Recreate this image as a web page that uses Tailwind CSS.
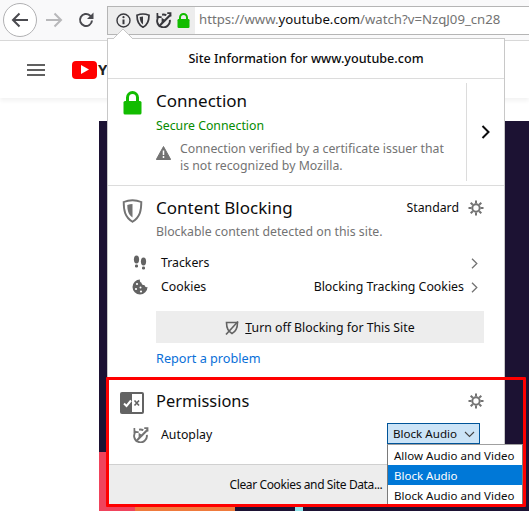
<!doctype html>
<html><head><meta charset="utf-8">
<script src="https://cdn.jsdelivr.net/npm/@tailwindcss/browser@4"></script>
</head>
<body class="m-0 bg-white">
<div class="relative w-[529px] h-[511px] overflow-hidden bg-white text-[12.3px] text-[#0c0c0d]" style="font-family:'Noto Sans','Open Sans',sans-serif">

  <!-- toolbar -->
  <div class="flex items-center h-[41px] bg-[#f9f9fa] border-b border-[#d8d8d8]">
    <div class="ml-[3px] w-[34px] h-[34px] shrink-0 rounded-full border border-[#b1b1b3] bg-white flex items-center justify-center">
      <svg width="18" height="16" viewBox="0 0 18 16" fill="none" stroke="#4a4a4f" stroke-width="2"><path d="M17 8H2M8.500 1.500 2 8l6.500 6.500"/></svg>
    </div>
    <svg class="ml-[8px] shrink-0" width="18" height="16" viewBox="0 0 18 16" fill="none" stroke="#b8b8ba" stroke-width="2"><path d="M1 8h15M9.500 1.500 16 8l-6.500 6.500"/></svg>
    <svg class="ml-[15px] shrink-0" width="16" height="16" viewBox="0 0 16 16" fill="none" stroke="#4a4a4f" stroke-width="2"><path d="M14 8.500a6 6 0 1 1-2-5L14 5"/><path d="M15.500 .5V7H9" fill="#4a4a4f" stroke="none"/></svg>
    <div class="ml-[13px] flex-1 h-[29px] border border-[#b5b5b5] border-r-0 bg-white flex items-stretch">
      <div class="w-[87px] shrink-0 bg-[#ededed] flex items-center pl-[8px] gap-[5px]">
        <svg class="shrink-0" width="15" height="15" viewBox="0 0 15 15" fill="none" stroke="#38383d"><circle cx="7.500" cy="7.500" r="6.500" stroke-width="1.400"/><path d="M7.500 6.500v4.700" stroke-width="2"/><circle cx="7.500" cy="4.200" r="1.100" fill="#38383d" stroke="none"/></svg>
        <svg class="shrink-0" width="14" height="15" viewBox="0 0 14 15" fill="none"><path d="M7 1c2 0 4 .4 6 1.200 0 5-.6 9.500-6 12C1.600 11.700 1 7.200 1 2.200 3 1.400 5 1 7 1Z" stroke="#38383d" stroke-width="1.700"/><path d="M7 3.500v8C4.500 10 3.800 7.300 3.700 4.100 4.800 3.700 5.900 3.500 7 3.500Z" fill="#38383d"/></svg>
        <svg class="shrink-0" width="17" height="16" viewBox="0 0 18 17" fill="none" stroke="#38383d" stroke-width="2"><path d="M4.500 4.400A6.800 6.800 0 1 0 15.700 8.300"/><path d="M7.500 2.900A6.800 6.800 0 0 1 12 3.400"/><path d="M2.500 1v4.500H7" stroke-width="1.800"/><path d="M13 1.200h3.500v3.500" stroke-width="1.800"/><path d="M4 15.500 16.500 3" stroke-width="2.200"/><path d="M7 6 11.500 9 7 12Z" fill="#38383d" stroke="none"/></svg>
        <svg class="shrink-0" width="13" height="15" viewBox="0 0 13 15"><path d="M3 7V4.500a3.500 3.500 0 0 1 7 0V7" fill="none" stroke="#12bc00" stroke-width="2"/><rect x="0.500" y="6" width="12" height="9" rx="1.200" fill="#12bc00"/></svg>
      </div>
      <div class="pl-[4px] flex items-center whitespace-nowrap text-[13.200px] text-[#737373]">https://www.<span class="text-[#0c0c0d]">youtube.com</span>/watch?v=NzqJ09_cn28</div>
    </div>
  </div>

  <!-- page header -->
  <div class="flex items-center h-[57px] shadow-[0_3px_4px_rgba(0,0,0,0.05)]">
    <div class="ml-[27px] w-[18px] flex flex-col gap-[3px]">
      <div class="h-[2px] bg-[#606060]"></div><div class="h-[2px] bg-[#606060]"></div><div class="h-[2px] bg-[#606060]"></div>
    </div>
    <div class="ml-[27px] w-[25px] h-[18px] rounded-[4px] bg-[#f00] flex items-center justify-center">
      <svg width="8" height="9" viewBox="0 0 8 9"><path d="M0 0l8 4.500L0 9Z" fill="#fff"/></svg>
    </div>
    <span class="text-[15px] font-bold text-[#222] ml-[1px]">Y</span>
  </div>

  <!-- video area -->
  <div class="absolute left-[99px] right-0 top-[121px] bottom-0 bg-[#1c1233]">
    <div class="absolute left-0 w-[38px] top-[331px] bottom-0 bg-[#f0435c]"></div>
    <div class="absolute left-[36px] w-[100px] top-[382px] bottom-0 bg-[#ef7a3c]"></div>
    <div class="absolute left-[196px] w-[8px] top-[380px] bottom-0 bg-[#8fe3ea]"></div>
  </div>

  <!-- panel -->
  <div class="absolute left-[107px] top-[38px] w-[398px] h-[468px] bg-white border border-[#c8c8c8] border-b-0 flex flex-col">
    <div class="h-[40px] shrink-0 flex items-center justify-center border-b border-[#dcdcdc] pt-[2px] font-medium text-[12.600px] text-[#0c0c0d]">Site Information for www.youtube.com</div>

    <!-- connection -->
    <div class="h-[107px] shrink-0 border-b border-[#dcdcdc] flex">
      <svg class="ml-[15px] mt-[12px] shrink-0" width="19" height="24" viewBox="0 0 19 24"><path d="M4.500 11V6.500a5 5 0 0 1 10 0V11" fill="none" stroke="#12bc00" stroke-width="3"/><rect x="0.500" y="10" width="18" height="13.500" rx="1.500" fill="#12bc00"/></svg>
      <div class="ml-[14px] flex-1">
        <div class="mt-[10px] text-[17px] leading-[24px]">Connection</div>
        <div class="mt-[4px] leading-[18px] text-[#058b00]">Secure Connection</div>
        <div class="mt-[5px] flex">
          <svg class="mt-[6px] mr-[9px] shrink-0" width="15" height="14" viewBox="0 0 15 14"><path d="M7.500 .5 14.700 13.500H.3Z" fill="#737373" stroke="#737373" stroke-linejoin="round"/><path d="M7.500 4.500v4.500M7.500 10v2" stroke="#fff" stroke-width="1.500"/></svg>
          <div class="leading-[17px] text-[#737373] w-[275px]">Connection verified by a certificate issuer that is not recognized by Mozilla.</div>
        </div>
      </div>
      <div class="w-[38px] shrink-0 my-[4px] border-l border-[#dcdcdc] flex items-center justify-center">
        <svg width="9" height="14" viewBox="0 0 9 14" fill="none" stroke="#0c0c0d" stroke-width="2"><path d="M1.500 1 7.500 7l-6 6"/></svg>
      </div>
    </div>

    <!-- blocking -->
    <div class="flex-1 relative">
      <div class="flex items-start pl-[14px] pr-[20px] pt-[10px]">
        <svg class="shrink-0 mt-[3px]" width="21" height="24" viewBox="0 0 21 24" fill="none"><path d="M10.500 1.200c3 0 6 .6 8.800 1.800 0 8-1 15-8.800 19.800C2.700 18 1.700 11 1.700 3c2.800-1.200 5.800-1.800 8.800-1.800Z" stroke="#737373" stroke-width="1.900"/><path d="M10.500 5v13.500C6 15.500 5.400 11 5.300 6c1.700-.7 3.400-1 5.200-1Z" fill="#737373"/></svg>
        <div class="ml-[13px] flex-1">
          <div class="flex items-center justify-between">
            <span class="text-[17px] leading-[24px]">Content Blocking</span>
            <span class="flex items-center">Standard
              <svg class="ml-[9px]" width="16" height="16" viewBox="0 0 16 16" fill="none" stroke="#737373"><circle cx="8" cy="8" r="3.700" stroke-width="2"/><path stroke-width="2" d="M8 .5v3M8 12.500v3M.5 8h3M12.500 8h3M2.700 2.700l2.100 2.100M11.200 11.200l2.100 2.100M13.300 2.700l-2.100 2.100M4.800 11.200l-2.100 2.100"/></svg>
            </span>
          </div>
          <div class="mt-[3px] leading-[18px] text-[#737373]">Blockable content detected on this site.</div>
        </div>
      </div>
      <div class="mt-[10px] ml-[24px] mr-[26px] h-[24px] flex items-center">
        <svg width="16" height="16" viewBox="0 0 16 16" fill="#636363"><ellipse cx="4.500" cy="4.500" rx="2.600" ry="4"/><rect x="3" y="9.500" width="3" height="3" rx="1.300"/><ellipse cx="11.500" cy="6.500" rx="2.600" ry="4"/><rect x="10" y="11.500" width="3" height="3" rx="1.300"/></svg>
        <span class="ml-[13px]">Trackers</span>
        <svg class="ml-auto" width="7" height="11" viewBox="0 0 7 11" fill="none" stroke="#737373" stroke-width="1.300"><path d="M1 .8 5.800 5.500 1 10.200"/></svg>
      </div>
      <div class="ml-[24px] mr-[26px] h-[24px] flex items-center">
        <svg width="16" height="16" viewBox="0 0 16 16"><path d="M8 .5a7.500 7.500 0 1 0 7.500 7.500c-1.500.5-3-.5-3-2-1.500.3-3-.8-3-2.300C8 3.500 7.600 2 8 .5Z" fill="#636363"/><g fill="#fff"><circle cx="5" cy="5" r="1.100"/><circle cx="4" cy="10" r="1.100"/><circle cx="8.500" cy="8.500" r="1"/><circle cx="9" cy="12.500" r="1.100"/></g></svg>
        <span class="ml-[13px]">Cookies</span>
        <span class="ml-auto text-[12.350px]">Blocking Tracking Cookies</span>
        <svg class="ml-[7px]" width="7" height="11" viewBox="0 0 7 11" fill="none" stroke="#737373" stroke-width="1.300"><path d="M1 .8 5.800 5.500 1 10.200"/></svg>
      </div>
      <div class="mt-[12px] ml-[48px] mr-[20px] h-[32px] pt-[2px] bg-[#ededed] flex items-center justify-center">
        <svg class="mr-[6px]" width="14" height="14" viewBox="0 0 14 14" fill="none" stroke="#636363" stroke-width="1.600"><path d="M1.500 1.500h11c0 5-1.500 9-5.500 11C3 10.500 1.500 6.500 1.500 1.500Z"/><path d="M13 .5 1 13.500"/></svg>
        <span><span class="underline">T</span>urn off Blocking for This Site</span>
      </div>
      <div class="mt-[5px] ml-[48px] text-[12.700px] leading-[20px] text-[#0a6fd8]">Report a problem</div>

      <!-- permissions -->
      <div class="mt-[20px] flex items-start pl-[12px] pr-[20px]">
        <svg class="shrink-0 mt-[4px]" width="24" height="22" viewBox="0 0 24 22"><rect width="24" height="22" rx="2" fill="#636363"/><rect x="12" y="2" width="10" height="18" fill="#fff"/><path d="M4 11.500 6.500 14 11 8.500" fill="none" stroke="#fff" stroke-width="2"/><path d="M14.500 8.500l4.500 5M19 8.500l-4.500 5" stroke="#636363" stroke-width="1.600"/></svg>
        <div class="ml-[12px] flex-1 flex items-center justify-between">
          <span class="text-[16.400px] leading-[26px]">Permissions</span>
          <svg width="16" height="16" viewBox="0 0 16 16" fill="none" stroke="#737373"><circle cx="8" cy="8" r="3.700" stroke-width="2"/><path stroke-width="2" d="M8 .5v3M8 12.500v3M.5 8h3M12.500 8h3M2.700 2.700l2.100 2.100M11.200 11.200l2.100 2.100M13.300 2.700l-2.100 2.100M4.800 11.200l-2.100 2.100"/></svg>
        </div>
      </div>
      <div class="mt-[10px] ml-[24px] h-[22px] flex items-center">
        <svg width="17" height="16" viewBox="0 0 18 17" fill="none" stroke="#737373" stroke-width="2"><path d="M4.500 4.400A6.800 6.800 0 1 0 15.700 8.300"/><path d="M7.500 2.900A6.800 6.800 0 0 1 12 3.400"/><path d="M2.500 1v4.500H7" stroke-width="1.800"/><path d="M13 1.200h3.500v3.500" stroke-width="1.800"/><path d="M4 15.500 16.500 3" stroke-width="2.200"/><path d="M7 6 11.500 9 7 12Z" fill="#737373" stroke="none"/></svg>
        <span class="ml-[12px]">Autoplay</span>
      </div>
    </div>

    <!-- footer -->
    <div class="h-[42px] shrink-0 bg-[#ededed] border-t border-[#d0d0d0] flex items-center justify-center pb-[1px] text-[12px] tracking-[-0.38px]">Clear Cookies and Site Data...</div>
  </div>

  <!-- doorhanger arrow -->
  <svg class="absolute left-[113px] top-[29px]" width="20" height="10" viewBox="0 0 20 10"><path d="M0 10 10 0l10 10" fill="#fff" stroke="#c8c8c8"/></svg>

  <!-- select + dropdown -->
  <div class="absolute left-[387px] top-[423px] w-[93px] h-[21px] bg-[#cce4f7] border border-[#005499] flex items-center pl-[5px] pt-[1px] whitespace-nowrap text-[11.600px]">Block Audio
    <svg class="absolute right-[4px] top-[7px]" width="11" height="7" viewBox="0 0 11 7" fill="none" stroke="#444" stroke-width="1.100"><path d="M1 1l4.500 4.500L10 1"/></svg>
  </div>
  <div class="absolute left-[387px] top-[444px] w-[136px] bg-white border border-[#7a7a7a] border-t-[#a0a0a0] border-b-0 text-[11.500px] leading-[21px] whitespace-nowrap">
    <div class="pl-[6px] h-[20px]">Allow Audio and Video</div>
    <div class="pl-[6px] h-[20px] bg-[#0078d7] text-white">Block Audio</div>
    <div class="pl-[6px] h-[20px]">Block Audio and Video</div>
  </div>

  <!-- annotation -->
  <div class="absolute left-[106px] top-[377px] w-[420px] h-[130px] border-[3px] border-[#f00] rounded-[1px]"></div>
</div>
</body></html>
